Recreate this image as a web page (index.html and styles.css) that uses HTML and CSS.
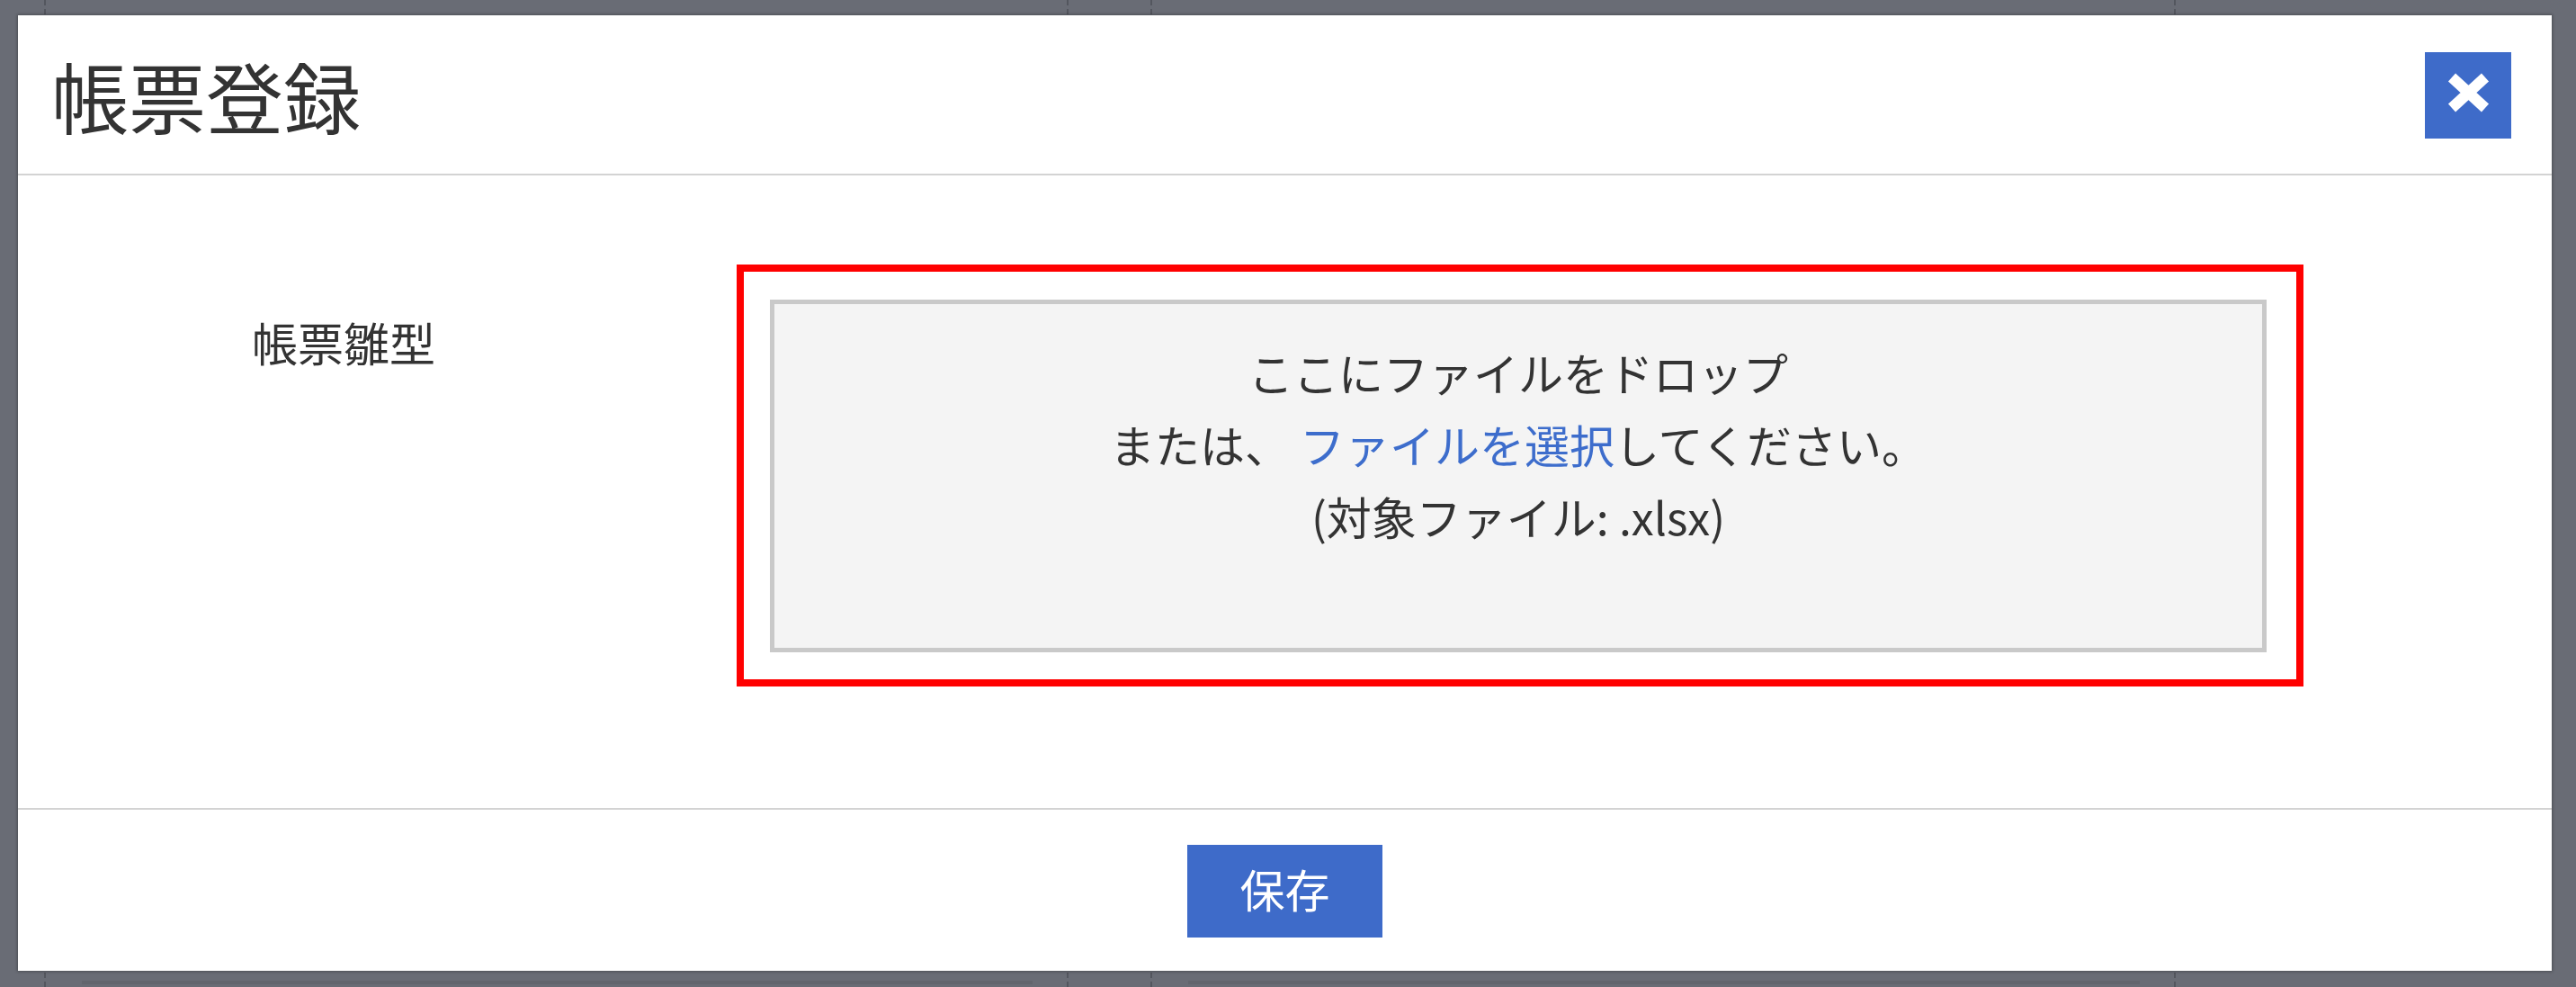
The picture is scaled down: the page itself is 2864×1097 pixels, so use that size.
FILE: index.html
```html
<!DOCTYPE html>
<html lang="ja">
<head>
<meta charset="utf-8">
<title>帳票登録</title>
<link rel="stylesheet" href="styles.css">
</head>
<body>
<div class="page">
  <div class="col col-a"></div>
  <div class="col col-b"><span class="bar"></span></div>
  <div class="col col-c"></div>
  <div class="col col-d"><span class="bar"></span></div>
  <div class="col col-e"></div>
</div>

<div class="modal">
  <div class="dialog">
    <header class="dialog-header">
      <h1 class="dialog-title">帳票登録</h1>
      <button class="close-btn" type="button" aria-label="閉じる">
        <svg class="close-icon" viewBox="0 0 96 96" width="96" height="96" aria-hidden="true">
          <path d="M30 28 L67 62 M67 28 L30 62" stroke="#ffffff" stroke-width="12" fill="none" stroke-linecap="butt"/>
        </svg>
      </button>
    </header>

    <div class="dialog-body">
      <div class="form-row">
        <label class="form-label">帳票雛型</label>
        <div class="highlight">
          <div class="dropzone">
            <p class="dz-line">ここにファイルをドロップ</p>
            <p class="dz-line">または、 <a class="dz-link" href="#">ファイルを選択</a>してください。</p>
            <p class="dz-line">(対象ファイル: .xlsx)</p>
          </div>
        </div>
      </div>
    </div>

    <footer class="dialog-footer">
      <button class="save-btn" type="button">保存</button>
    </footer>
  </div>
</div>
</body>
</html>
```

FILE: styles.css
```css
* {
  box-sizing: border-box;
}

html, body {
  margin: 0;
  padding: 0;
}

body {
  background: #696c75;
  font-family: "Noto Sans CJK JP", "Noto Sans", sans-serif;
  color: #333333;
  overflow: hidden;
}

/* backdrop page behind the modal */
.page {
  display: flex;
  height: 100vh;
}

.col {
  position: relative;
  height: 100%;
  border-right: 2px dashed #53565e;
}

.col-a { width: 51px; }
.col-b { width: 1137px; }
.col-c { width: 93px; }
.col-d { width: 1138px; }
.col-e { flex: 1; border-right: none; }

.bar {
  position: absolute;
  left: 40px;
  right: 38px;
  bottom: 3px;
  height: 4px;
  background: #62656d;
}

/* modal overlay */
.modal {
  position: fixed;
  inset: 0;
  padding: 17px 27px 18px 20px;
  display: flex;
}

.dialog {
  flex: 1;
  display: flex;
  flex-direction: column;
  background: #ffffff;
  box-shadow: 0 0 3px 1px rgba(0, 0, 0, 0.28);
}

.dialog-header {
  height: 178px;
  padding: 41px 45px 0 37px;
  display: flex;
  justify-content: space-between;
  align-items: flex-start;
  border-bottom: 2px solid #d3d3d3;
}

.dialog-title {
  margin: 5px 0 0;
  font-size: 86px;
  line-height: 1;
  font-weight: 400;
  color: #333333;
}

.close-btn {
  width: 96px;
  height: 96px;
  padding: 0;
  border: none;
  background: #3e6bc9;
  display: block;
  cursor: pointer;
}

.close-icon {
  display: block;
}

.dialog-body {
  flex: 1;
  padding-top: 99px;
}

.form-row {
  display: grid;
  grid-template-columns: 799px 1742px;
}

.form-label {
  padding: 49px 0 0 260px;
  font-size: 51px;
  line-height: 74px;
  color: #333333;
}

.highlight {
  border: 8px solid #ff0000;
  padding: 31px 33px 30px 29px;
}

.dropzone {
  height: 392px;
  border: 5px solid #c9c9c9;
  background: #f4f4f4;
  padding-top: 35px;
  text-align: center;
}

.dz-line {
  margin: 0;
  font-size: 50px;
  line-height: 80px;
  color: #333333;
}

.dz-link {
  color: #3d6dcc;
  text-decoration: none;
}

.dialog-footer {
  height: 181px;
  border-top: 2px solid #d3d3d3;
  padding-top: 39px;
  display: flex;
  justify-content: center;
  align-items: flex-start;
}

.save-btn {
  width: 217px;
  height: 103px;
  padding: 0 0 6px;
  border: none;
  background: #3e6bc9;
  color: #ffffff;
  font-family: "Noto Sans CJK JP", "Noto Sans", sans-serif;
  font-size: 50px;
  line-height: 97px;
  cursor: pointer;
}
```
